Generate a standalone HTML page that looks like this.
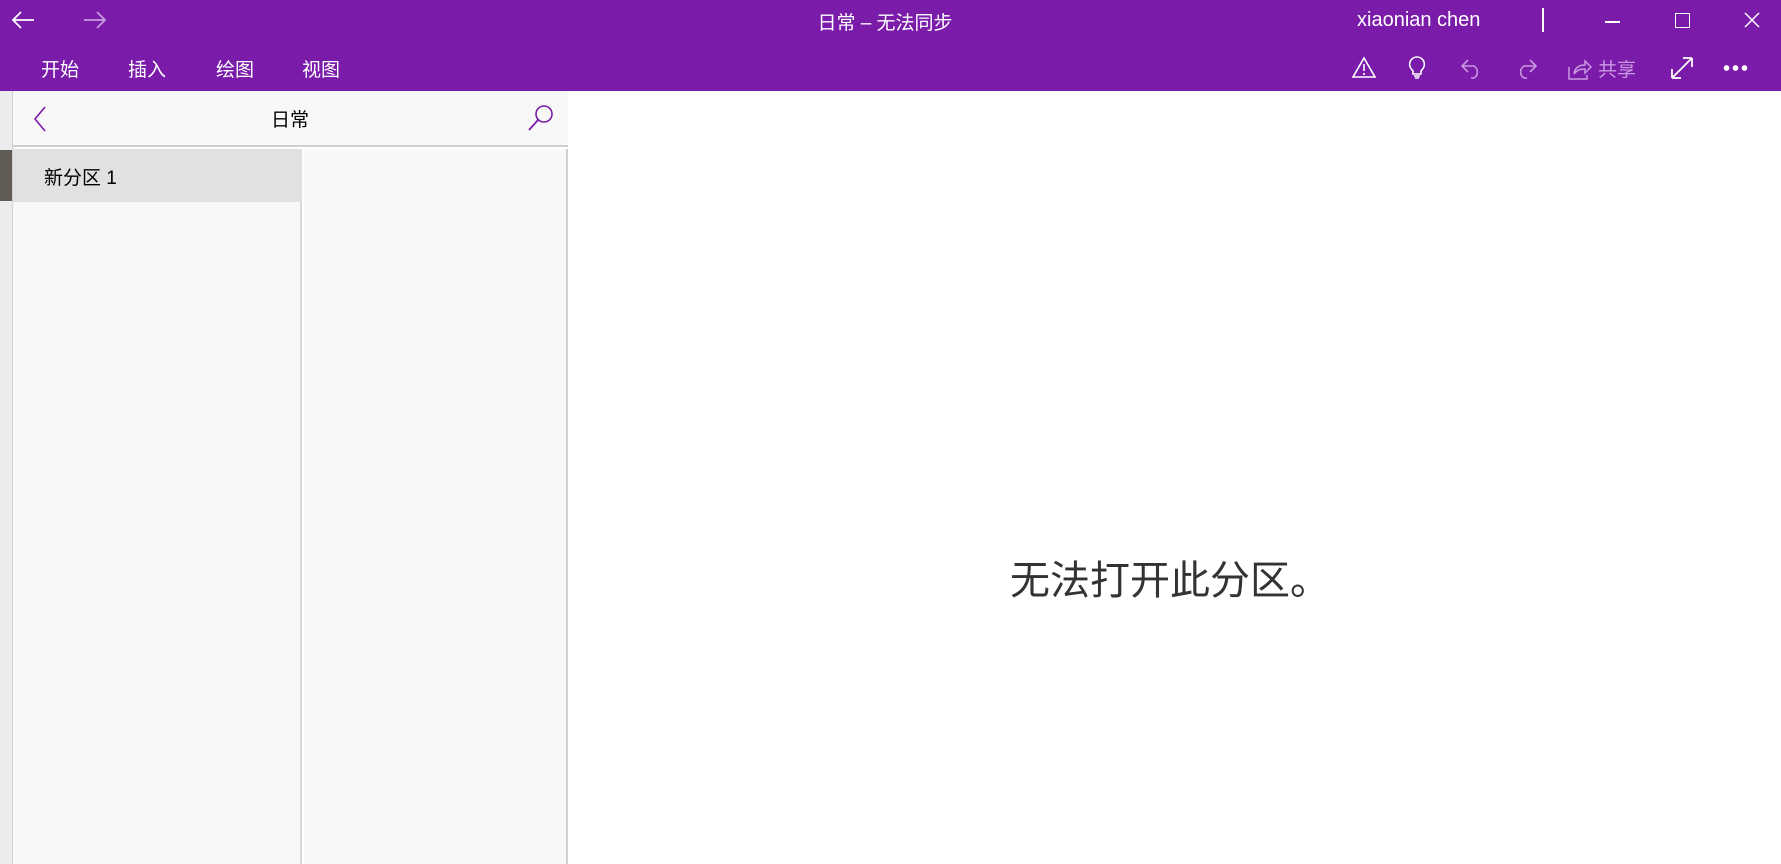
<!DOCTYPE html>
<html><head><meta charset="utf-8"><style>
*{margin:0;padding:0;box-sizing:border-box}
body{width:1781px;height:864px;overflow:hidden;background:#fff;font-family:"Liberation Sans","Noto Sans CJK SC",sans-serif;position:relative}
.abs{position:absolute}
.bar{left:0;top:0;width:1781px;height:91px;background:#7a1baa}
.w{color:#fff}
.tab{top:55px;font-size:19px;color:#fff}
svg{position:absolute;overflow:visible}
</style></head><body>
<div class="abs bar"></div>
<svg style="left:10px;top:10px" width="26" height="20"><path d="M24 10H3M11 2L3 10L11 18" stroke="#fff" stroke-width="1.8" fill="none"/></svg>
<svg style="left:82px;top:10px" width="26" height="20"><path d="M2 10H23M15 2L23 10L15 18" stroke="#c99ae0" stroke-width="1.8" fill="none"/></svg>
<div class="abs w" style="left:785px;top:8px;width:200px;text-align:center;font-size:19px">日常 – 无法同步</div>
<div class="abs w" style="left:1357px;top:9px;font-size:20px">xiaonian chen</div>
<div class="abs" style="left:1542px;top:8px;width:2px;height:24px;background:#fff"></div>
<div class="abs" style="left:1605px;top:21px;width:15px;height:1.5px;background:#fff"></div>
<div class="abs" style="left:1675px;top:13px;width:15px;height:15px;border:1.5px solid #fff"></div>
<svg style="left:1744px;top:12px" width="16" height="16"><path d="M1 1L15 15M15 1L1 15" stroke="#fff" stroke-width="1.5"/></svg>
<div class="abs tab" style="left:41px">开始</div>
<div class="abs tab" style="left:128px">插入</div>
<div class="abs tab" style="left:216px">绘图</div>
<div class="abs tab" style="left:302px">视图</div>
<svg style="left:1352px;top:56px" width="24" height="22"><path d="M12 2L23 21H1Z M12 8V15 M12 17V19" stroke="#fff" stroke-width="1.6" fill="none"/></svg>
<svg style="left:1408px;top:55px" width="18" height="26"><path d="M5 16C1 12 1 8 3 5C6 1 12 1 15 5C17 8 17 12 13 16V19H5Z M6 21H12 M7 23H11" stroke="#fff" stroke-width="1.6" fill="none"/></svg>
<svg style="left:1461px;top:57px" width="22" height="22"><path d="M2 9H13A7 7 0 0 1 13 21H10 M7 3L1 9L7 15" stroke="#c99ae0" stroke-width="1.6" fill="none"/></svg>
<svg style="left:1515px;top:57px" width="22" height="22"><path d="M20 9H9A7 7 0 0 0 9 21H12 M15 3L21 9L15 15" stroke="#c99ae0" stroke-width="1.6" fill="none"/></svg>
<svg style="left:1568px;top:56px" width="24" height="24"><path d="M1 11V23H19V19 M6 18C7 11 12 9 17 9V5L23 11L17 17V13C12 13 9 14 6 18" stroke="#c99ae0" stroke-width="1.5" fill="none"/></svg>
<div class="abs" style="left:1598px;top:55px;font-size:19px;color:#c99ae0">共享</div>
<svg style="left:1670px;top:56px" width="24" height="24"><path d="M2 22L22 2 M2 22V13 M2 22H11 M22 2V11 M22 2H13" stroke="#fff" stroke-width="1.8" fill="none"/></svg>
<div class="abs" style="left:1722px;top:65px;width:26px;height:6px;background:radial-gradient(circle,#fff 2.6px,transparent 3px) 0 0/9px 6px repeat-x"></div>
<div class="abs" style="left:0;top:91px;width:13px;height:773px;background:#ececec;border-right:1px solid #d0d0d0"></div>
<div class="abs" style="left:0;top:150px;width:12px;height:51px;background:#625c57"></div>
<div class="abs" style="left:13px;top:91px;width:555px;height:56px;background:#f8f8f8;border-bottom:2px solid #cfcfcf"></div>
<svg style="left:33px;top:106px" width="14" height="26"><path d="M12 1L2 13L12 25" stroke="#7a1baa" stroke-width="1.6" fill="none"/></svg>
<div class="abs" style="left:271px;top:105px;font-size:19px;color:#000">日常</div>
<svg style="left:527px;top:104px" width="28" height="28"><circle cx="17" cy="10" r="8" stroke="#7a1baa" stroke-width="1.6" fill="none"/><path d="M11 16L2 26" stroke="#7a1baa" stroke-width="1.8"/></svg>
<div class="abs" style="left:13px;top:149px;width:289px;height:715px;background:#f8f8f8;border-right:2px solid #d8d8d8"></div>
<div class="abs" style="left:13px;top:149px;width:289px;height:53px;background:#e1e1e1"></div>
<div class="abs" style="left:44px;top:163px;font-size:19px;color:#000">新分区 1</div>
<div class="abs" style="left:304px;top:149px;width:264px;height:715px;background:#f8f8f8;border-right:2px solid #d0d0d0"></div>
<div class="abs" style="left:900px;top:548px;width:540px;text-align:center;font-size:40px;color:#333">无法打开此分区。</div>
</body></html>
